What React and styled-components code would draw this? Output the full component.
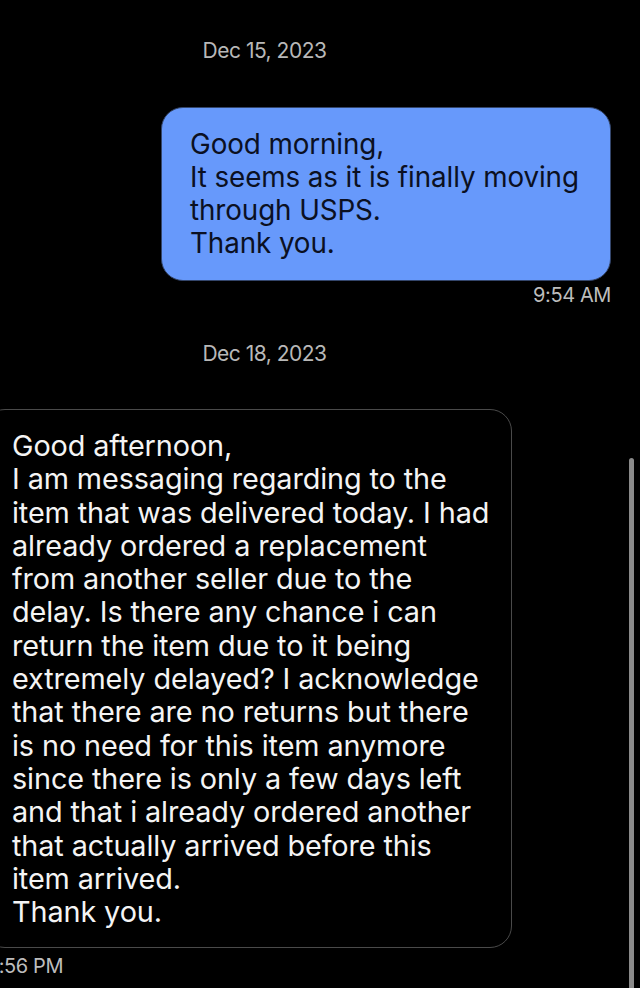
import React from 'react'
import styled, { createGlobalStyle } from 'styled-components'

const GlobalStyle = createGlobalStyle`
  html, body { margin: 0; padding: 0; background: #000; }
  body { font-family: Inter, "Noto Sans", sans-serif; -webkit-font-smoothing: antialiased; }
`

const Screen = styled.div`
  position: relative; width: 640px; height: 988px; overflow: hidden; background: #000;
`

const Thread = styled.div`
  display: flex; flex-direction: column;
  width: 693px; margin-left: -82px; padding-top: 39px;
`

const DateLabel = styled.div`
  align-self: center;
  font-size: 21px; line-height: 24px; letter-spacing: -0.5px; color: #b8b8b8;
  margin-bottom: ${({ gap }) => gap}px;
`

const Bubble = styled.div`
  box-sizing: border-box;
  width: ${({ w }) => w}px;
  align-self: ${({ mine }) => (mine ? 'flex-end' : 'flex-start')};
  margin-left: ${({ mine }) => (mine ? 0 : 65)}px;
  padding: ${({ mine }) => (mine ? '20px 28px' : '19px 28px')};
  border-radius: 22px;
  background: ${({ mine }) => (mine ? '#6799fb' : '#000')};
  border: 1.5px solid ${({ mine }) => (mine ? '#34466b' : '#4a4a4a')};
  color: ${({ mine }) => (mine ? '#0b1022' : '#f4f4f4')};
  font-size: ${({ mine }) => (mine ? 27.8 : 28.8)}px;
  line-height: ${({ mine }) => (mine ? 33 : 33.3)}px;
  letter-spacing: -0.1px;
  white-space: pre;
`

const Time = styled.div`
  align-self: ${({ mine }) => (mine ? 'flex-end' : 'flex-start')};
  margin-left: ${({ mine }) => (mine ? 0 : 73)}px;
  margin-top: ${({ mine }) => (mine ? 2 : 6)}px;
  margin-bottom: ${({ gap }) => gap}px;
  font-size: 20px; line-height: 24px; letter-spacing: -0.4px; color: #bdbdbd;
`

const ScrollThumb = styled.div`
  position: absolute; right: 6px; top: 458px; bottom: -10px;
  width: 5px; border-radius: 3px; background: #8a8a8a;
`

const sent = `Good morning,
It seems as it is finally moving
through USPS.
Thank you.`

const received = `Good afternoon,
I am messaging regarding to the
item that was delivered today. I had
already ordered a replacement
from another seller due to the
delay. Is there any chance i can
return the item due to it being
extremely delayed? I acknowledge
that there are no returns but there
is no need for this item anymore
since there is only a few days left
and that i already ordered another
that actually arrived before this
item arrived.
Thank you.`

export default function App() {
  return (
    <Screen>
      <GlobalStyle />
      <Thread>
        <DateLabel gap={44}>Dec 15, 2023</DateLabel>
        <Bubble mine w={450}>{sent}</Bubble>
        <Time mine gap={35}>9:54 AM</Time>

        <DateLabel gap={43}>Dec 18, 2023</DateLabel>
        <Bubble w={529}>{received}</Bubble>
        <Time gap={20}>1:56 PM</Time>
      </Thread>
      <ScrollThumb />
    </Screen>
  )
}
